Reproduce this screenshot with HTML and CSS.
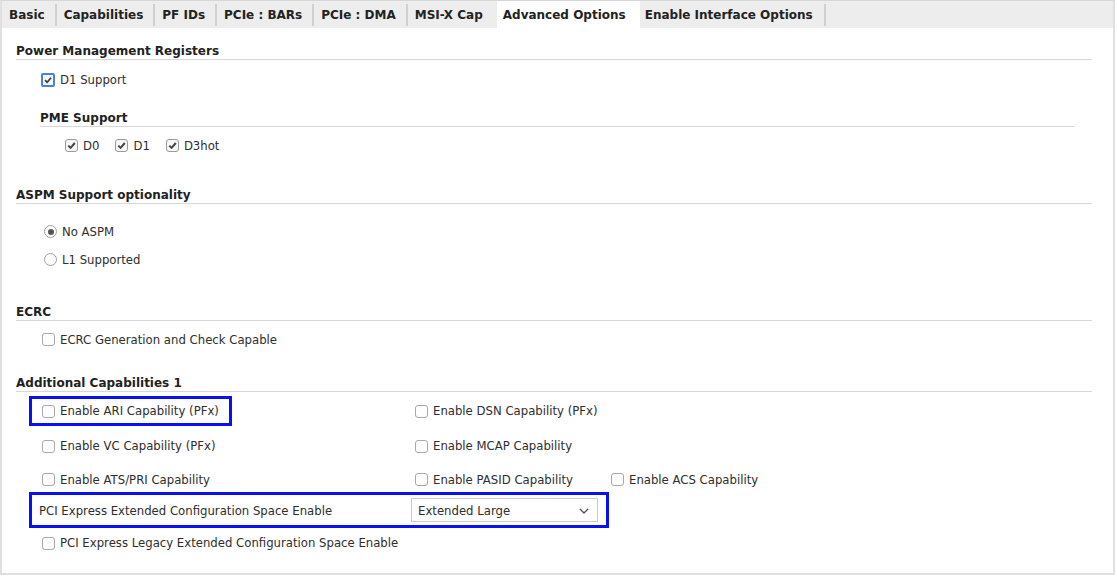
FILE: index.html
```html
<!DOCTYPE html>
<html>
<head>
<meta charset="utf-8">
<link rel="stylesheet" href="styles.css">
</head>
<body>
<div class="frame">
  <div class="tabbar">
    <div class="tab sep">Basic</div>
    <div class="tab sep">Capabilities</div>
    <div class="tab sep">PF IDs</div>
    <div class="tab sep">PCIe : BARs</div>
    <div class="tab sep">PCIe : DMA</div>
    <div class="tab">MSI-X Cap</div>
    <div class="tab active">Advanced Options</div>
    <div class="tab sep last">Enable Interface Options</div>
  </div>
  <div class="content">
    <div class="title t-power">Power Management Registers</div>
    <div class="opts o-d1">
      <label class="opt"><span class="cb checked focus"><svg viewBox="0 0 12 12" width="12" height="12"><path d="M2.5 6.2 L5 8.7 L9.6 3.2" fill="none" stroke="#3a3a3a" stroke-width="2"/></svg></span>D1 Support</label>
    </div>
    <div class="sub">
      <div class="title t-pme">PME Support</div>
      <div class="opts o-pme">
        <label class="opt"><span class="cb checked"><svg viewBox="0 0 11 11" width="11" height="11"><path d="M2.3 5.6 L4.6 7.9 L8.8 3" fill="none" stroke="#444" stroke-width="2"/></svg></span>D0</label>
        <label class="opt"><span class="cb checked"><svg viewBox="0 0 11 11" width="11" height="11"><path d="M2.3 5.6 L4.6 7.9 L8.8 3" fill="none" stroke="#444" stroke-width="2"/></svg></span>D1</label>
        <label class="opt"><span class="cb checked"><svg viewBox="0 0 11 11" width="11" height="11"><path d="M2.3 5.6 L4.6 7.9 L8.8 3" fill="none" stroke="#444" stroke-width="2"/></svg></span>D3hot</label>
      </div>
    </div>
    <div class="title t-aspm">ASPM Support optionality</div>
    <div class="radios">
      <label class="opt"><span class="rb on"></span>No ASPM</label>
      <label class="opt r2"><span class="rb"></span>L1 Supported</label>
    </div>
    <div class="title t-ecrc">ECRC</div>
    <div class="opts o-ecrc">
      <label class="opt"><span class="cb"></span>ECRC Generation and Check Capable</label>
    </div>
    <div class="title t-add">Additional Capabilities 1</div>
    <div class="grid">
      <div class="row h30">
        <div class="c1"><div class="hl hl-ari"><label class="opt"><span class="cb"></span>Enable ARI Capability (PFx)</label></div></div>
        <div class="c2"><label class="opt"><span class="cb"></span>Enable DSN Capability (PFx)</label></div>
      </div>
      <div class="row h38">
        <div class="c1 pad"><label class="opt"><span class="cb"></span>Enable VC Capability (PFx)</label></div>
        <div class="c2"><label class="opt"><span class="cb"></span>Enable MCAP Capability</label></div>
      </div>
      <div class="row h28">
        <div class="c1 pad"><label class="opt"><span class="cb"></span>Enable ATS/PRI Capability</label></div>
        <div class="c2"><label class="opt"><span class="cb"></span>Enable PASID Capability</label></div>
        <div class="c3"><label class="opt"><span class="cb"></span>Enable ACS Capability</label></div>
      </div>
      <div class="row h36">
        <div class="hl hl-cfg">
          <span class="cfg-label">PCI Express Extended Configuration Space Enable</span>
          <div class="select"><span>Extended Large</span><svg class="chev" viewBox="0 0 10 6" width="10" height="6"><path d="M1 1 L5 5 L9 1" fill="none" stroke="#555" stroke-width="1.4"/></svg></div>
        </div>
      </div>
      <div class="row h30">
        <div class="c1 pad wide"><label class="opt"><span class="cb"></span>PCI Express Legacy Extended Configuration Space Enable</label></div>
      </div>
    </div>
  </div>
</div>
</body>
</html>
```

FILE: styles.css
```css
* { box-sizing: border-box; }
html, body { margin: 0; padding: 0; background: #ffffff; }
body {
  font-family: "DejaVu Sans", "Liberation Sans", sans-serif;
  color: #2b2b2b;
  width: 1117px;
  height: 576px;
  overflow: hidden;
}
.frame {
  width: 1115px;
  height: 575px;
  border: 2px solid #e0e0e0;
  border-top: 1px solid #d6d6d6;
  background: #fff;
}
.tabbar {
  display: flex;
  height: 27px;
  background: #ededed;
  align-items: stretch;
}
.tab {
  font-weight: bold;
  font-size: 12px;
  color: #222;
  padding: 0 10px 0 7px;
  display: flex;
  align-items: center;
  position: relative;
}
.tab.sep { padding-right: 12px; }
.tab.sep::after {
  content: "";
  position: absolute;
  right: 0;
  top: 3px;
  bottom: 2px;
  width: 2px;
  background: #d0d0d0;
}
.tab.active {
  background: #ffffff;
  padding: 0 14px 0 6px;
  margin-left: 4px;
}
.tab.last { padding-left: 5px; padding-right: 13px; }
.content {
  padding: 0 21px 0 14px;
}
.title {
  font-weight: bold;
  font-size: 12px;
  line-height: 15px;
  color: #222;
  padding-bottom: 0;
  border-bottom: 1px solid #d8d8d8;
}
.t-power { margin-top: 16px; }
.t-pme { margin-top: 22px; }
.t-aspm { margin-top: 33px; }
.t-ecrc { margin-top: 36px; }
.t-add { margin-top: 27px; }
.sub { margin-left: 24px; margin-right: 17px; }
.opts { display: flex; height: 20px; align-items: center; }
.o-d1 { margin-top: 9px; padding-left: 25px; padding-top: 1px; }
.o-pme { margin-top: 8px; padding-left: 25px; gap: 16px; padding-top: 1px; }
.o-ecrc { margin-top: 8px; padding-left: 26px; padding-top: 1px; }
.opt {
  display: flex;
  align-items: center;
  font-size: 11.7px;
  color: #2e2e2e;
  white-space: nowrap;
}
.cb {
  width: 13px;
  height: 13px;
  border: 1px solid #a9a9a9;
  border-radius: 3px;
  background: #fdfdfd;
  margin-right: 5px;
  display: flex;
  align-items: center;
  justify-content: center;
  flex: none;
}
.cb.checked { background: #f6f6f6; border-color: #9a9a9a; }
.cb.focus {
  width: 14px;
  height: 14px;
  border: 2px solid #4e7fd6;
  border-radius: 2px;
  background: #f4f6fb;
}
.rb {
  width: 13px;
  height: 13px;
  border: 1px solid #a0a0a0;
  border-radius: 50%;
  background: #fdfdfd;
  margin-right: 5px;
  display: flex;
  align-items: center;
  justify-content: center;
  flex: none;
}
.rb.on::after {
  content: "";
  width: 6px;
  height: 6px;
  border-radius: 50%;
  background: #555;
}
.radios { margin-top: 17px; padding-left: 28px; display: flex; flex-direction: column; gap: 8px; }
.radios .opt { height: 20px; padding-top: 1px; }
.grid { margin-top: 4px; margin-left: 13px; display: flex; flex-direction: column; }
.row { display: flex; align-items: center; }
.h30 { height: 30px; }
.h38 { height: 38px; padding-top: 2px; }
.h28 { height: 28px; padding-top: 3px; }
.h36 { height: 36px; }
.c1 { width: 386px; display: flex; align-items: center; }
.c1.pad { padding-left: 13px; }
.c1.wide { width: auto; }
.c2 { width: 196px; display: flex; align-items: center; }
.c3 { display: flex; align-items: center; }
.hl {
  border: 3px solid #0a10f4;
  display: flex;
  align-items: center;
}
.hl-ari { width: 203px; height: 30px; padding-left: 10px; }
.hl-cfg { width: 580px; height: 36px; padding-left: 7px; padding-right: 8px; }
.cfg-label { font-size: 11.7px; color: #2e2e2e; padding-top: 1px; }
.select {
  margin-left: auto;
  width: 187px;
  height: 24px;
  border: 1px solid #cacaca;
  background: #fff;
  display: flex;
  align-items: center;
  padding: 1px 8px 0 6px;
  font-size: 11.7px;
  color: #2e2e2e;
}
.chev { margin-left: auto; }
```
